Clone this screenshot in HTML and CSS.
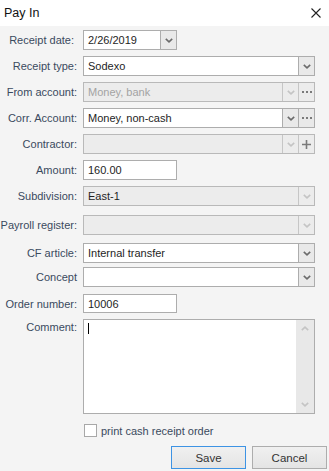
FILE: index.html
```html
<!DOCTYPE html>
<html>
<head>
<meta charset="utf-8">
<link rel="stylesheet" href="styles.css">
</head>
<body>
<div class="dialog">
  <div class="titlebar">
    <span class="title">Pay In</span>
    <svg class="close" width="10" height="10" viewBox="0 0 10 10"><path d="M0.5 0.5 L9.5 9.5 M9.5 0.5 L0.5 9.5" stroke="#222" stroke-width="1.1" fill="none"/></svg>
  </div>
  <div class="form">
    <div class="row">
      <label class="lbl lbl-date">Receipt date:</label>
      <div class="field short">
        <span class="val">2/26/2019</span>
        <span class="btn"><svg class="chev" viewBox="0 0 8 5"><path d="M0.8 0.8 L4 3.8 L7.2 0.8" /></svg></span>
      </div>
    </div>
    <div class="row">
      <label class="lbl">Receipt type:</label>
      <div class="field">
        <span class="val">Sodexo</span>
        <span class="btn"><svg class="chev" viewBox="0 0 8 5"><path d="M0.8 0.8 L4 3.8 L7.2 0.8" /></svg></span>
      </div>
    </div>
    <div class="row">
      <label class="lbl">From account:</label>
      <div class="field disabled">
        <span class="val">Money, bank</span>
        <span class="btn"><svg class="chev faint" viewBox="0 0 8 5"><path d="M0.8 0.8 L4 3.8 L7.2 0.8" /></svg></span>
        <span class="btn"><svg class="dots" viewBox="0 0 10 2"><rect x="0" y="0" width="2" height="2"/><rect x="4" y="0" width="2" height="2"/><rect x="8" y="0" width="2" height="2"/></svg></span>
      </div>
    </div>
    <div class="row">
      <label class="lbl">Corr. Account:</label>
      <div class="field">
        <span class="val">Money, non-cash</span>
        <span class="btn"><svg class="chev" viewBox="0 0 8 5"><path d="M0.8 0.8 L4 3.8 L7.2 0.8" /></svg></span>
        <span class="btn"><svg class="dots" viewBox="0 0 10 2"><rect x="0" y="0" width="2" height="2"/><rect x="4" y="0" width="2" height="2"/><rect x="8" y="0" width="2" height="2"/></svg></span>
      </div>
    </div>
    <div class="row">
      <label class="lbl">Contractor:</label>
      <div class="field disabled">
        <span class="val"></span>
        <span class="btn"><svg class="chev faint" viewBox="0 0 8 5"><path d="M0.8 0.8 L4 3.8 L7.2 0.8" /></svg></span>
        <span class="btn"><svg class="plus" viewBox="0 0 9 9"><path d="M4.5 0 V9 M0 4.5 H9" /></svg></span>
      </div>
    </div>
    <div class="row">
      <label class="lbl">Amount:</label>
      <div class="field short">
        <span class="val">160.00</span>
      </div>
    </div>
    <div class="row">
      <label class="lbl">Subdivision:</label>
      <div class="field disabled">
        <span class="val dark">East-1</span>
        <span class="btn"><svg class="chev faint" viewBox="0 0 8 5"><path d="M0.8 0.8 L4 3.8 L7.2 0.8" /></svg></span>
      </div>
    </div>
    <div class="row r-payroll">
      <label class="lbl">Payroll register:</label>
      <div class="field disabled">
        <span class="val"></span>
        <span class="btn"><svg class="chev faint" viewBox="0 0 8 5"><path d="M0.8 0.8 L4 3.8 L7.2 0.8" /></svg></span>
      </div>
    </div>
    <div class="row r-cf">
      <label class="lbl">CF article:</label>
      <div class="field">
        <span class="val">Internal transfer</span>
        <span class="btn"><svg class="chev" viewBox="0 0 8 5"><path d="M0.8 0.8 L4 3.8 L7.2 0.8" /></svg></span>
      </div>
    </div>
    <div class="row r-concept">
      <label class="lbl">Concept</label>
      <div class="field">
        <span class="val"></span>
        <span class="btn"><svg class="chev" viewBox="0 0 8 5"><path d="M0.8 0.8 L4 3.8 L7.2 0.8" /></svg></span>
      </div>
    </div>
    <div class="row r-order">
      <label class="lbl">Order number:</label>
      <div class="field short">
        <span class="val">10006</span>
      </div>
    </div>
    <div class="row r-comment">
      <label class="lbl">Comment:</label>
      <div class="field memo">
        <span class="val"><span class="caret"></span></span>
        <span class="scroll">
          <svg class="chev faint up" viewBox="0 0 8 5"><path d="M0.8 4.2 L4 1.2 L7.2 4.2" /></svg>
          <svg class="chev faint" viewBox="0 0 8 5"><path d="M0.8 0.8 L4 3.8 L7.2 0.8" /></svg>
        </span>
      </div>
    </div>
    <div class="row r-check">
      <span class="lbl"></span>
      <label class="check"><span class="box"></span>print cash receipt order</label>
    </div>
    <div class="buttons">
      <button class="pbtn default">Save</button>
      <button class="pbtn">Cancel</button>
    </div>
  </div>
</div>
</body>
</html>
```

FILE: styles.css
```css
* { box-sizing: border-box; }
html, body { margin: 0; padding: 0; }
body {
  width: 329px;
  height: 471px;
  background: #f4f4f4;
  font-family: "Liberation Sans", Arial, sans-serif;
  font-size: 11px;
  color: #1e1e1e;
  overflow: hidden;
}
.dialog { width: 329px; height: 471px; }
.titlebar {
  height: 26px;
  background: #ffffff;
  display: flex;
  align-items: center;
  justify-content: space-between;
  padding: 0 8px 0 4px;
}
.title { font-size: 12.5px; color: #111; }
.close { display: block; }
.form { padding: 4px 14px 0 0; }
.row {
  display: flex;
  align-items: center;
  height: 20px;
  margin-top: 6px;
}
.row:first-child { margin-top: 0; }
.r-payroll { margin-top: 9px; }
.r-cf { margin-top: 8px; }
.r-concept { margin-top: 4px; }
.r-order { margin-top: 7px; height: 19px; }
.r-comment { margin-top: 6px; height: 95px; align-items: flex-start; }
.r-check { margin-top: 10px; height: 13px; }
.lbl {
  width: 77px;
  flex: none;
  text-align: right;
  color: #3a4a5e;
  white-space: nowrap;
  margin-right: 6px;
}
.lbl-date { padding-right: 3px; }
.r-comment .lbl { padding-top: 2px; }
.field {
  flex: 1;
  height: 100%;
  display: flex;
  border: 1px solid #adadad;
  background: #ffffff;
}
.field.short { flex: none; width: 94px; }
.field.disabled { background: #ececec; border-color: #b9b9b9; }
.val {
  flex: 1;
  padding-left: 4px;
  display: flex;
  align-items: center;
  white-space: nowrap;
  overflow: hidden;
}
.disabled .val { color: #a3a3a3; }
.disabled .val.dark { color: #1e1e1e; }
.btn {
  flex: none;
  width: 16px;
  border-left: 1px solid #adadad;
  background: #e9e9e9;
  display: flex;
  align-items: center;
  justify-content: center;
}
.disabled .btn { border-left-color: #c6c6c6; background: #ececec; }
.chev {
  width: 8px;
  height: 5px;
  fill: none;
  stroke: #6b6b6b;
  stroke-width: 1.6;
}
.chev.faint { stroke: #c4c4c4; }
.dots { width: 10px; height: 2px; fill: #7a7a7a; }
.plus { width: 9px; height: 9px; fill: none; stroke: #7a7a7a; stroke-width: 1.6; }
.memo .val { align-items: flex-start; padding-top: 3px; }
.caret {
  display: block;
  width: 1px;
  height: 11px;
  background: #000;
}
.scroll {
  flex: none;
  width: 18px;
  background: #e8e8e8;
  display: flex;
  flex-direction: column;
  justify-content: space-between;
  align-items: center;
  padding: 6px 0 6px;
}
.check {
  display: flex;
  align-items: center;
  color: #3a4a5e;
  margin-left: 1px;
  white-space: nowrap;
}
.box {
  width: 13px;
  height: 13px;
  border: 1px solid #a8a8a8;
  background: #fff;
  margin-right: 4px;
}
.buttons {
  display: flex;
  justify-content: flex-end;
  gap: 6px;
  margin-top: 9px;
  margin-right: -12px;
}
.pbtn {
  width: 75px;
  height: 23px;
  border: 1px solid #adadad;
  background: linear-gradient(#f0f0f0, #e4e4e4);
  font-family: "Liberation Sans", Arial, sans-serif;
  font-size: 11.5px;
  color: #333;
  padding: 0;
}
.pbtn.default { border-color: #3d93e4; }
```
